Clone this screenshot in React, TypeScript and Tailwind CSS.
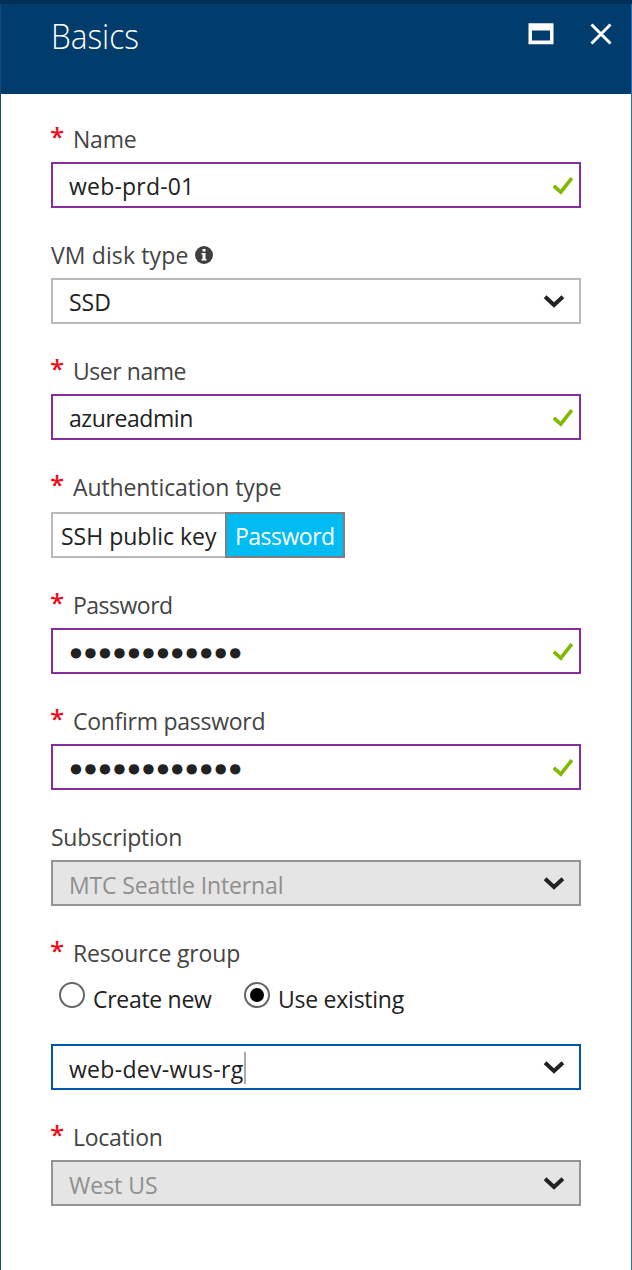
import type { ReactNode } from "react";

function Chevron() {
  return (
    <svg className="mr-[13px] h-6 w-6 shrink-0" viewBox="0 0 24 24" fill="none" stroke="#222" strokeWidth="4">
      <path d="M3.1 7.8 L12 16 L20.9 7.8" />
    </svg>
  );
}

function Check() {
  return (
    <svg className="mr-1 h-6 w-6 shrink-0" viewBox="0 0 24 24" fill="none" stroke="#7fba00" strokeWidth="3.6">
      <path d="M2.8 12.9 L9.8 19.2 L20.8 5.2" />
    </svg>
  );
}

function Label({ children, required, info, track = "", first }: { children: string; required?: boolean; info?: boolean; track?: string; first?: boolean }) {
  return (
    <div className={`flex items-end pb-[7px] text-[23px] leading-8 text-[#444] ${first ? "h-[68px]" : "h-[70px]"}`}>
      {required && (
        <span className="mb-[3px] w-[22px] shrink-0 -indent-px text-[26px] font-semibold leading-8 text-[#e81123]">*</span>
      )}
      <span className={`whitespace-nowrap ${track}`}>{children}</span>
      {info && (
        <svg className="mb-[7px] ml-[7px] h-[18px] w-[18px]" viewBox="0 0 18 18">
          <circle cx="9" cy="9" r="9" fill="#3f3f3f" />
          <path d="M7.5 3h3v2.4h-3zM6.5 7h4v6h1v1.5H6.5V13h1V8.5h-1z" fill="#fff" />
        </svg>
      )}
    </div>
  );
}

function Box({ children, border, icon, track = "", pad = "pt-px" }: { children: ReactNode; border: string; icon: ReactNode; track?: string; pad?: string }) {
  return (
    <div className={`flex h-[46px] items-center justify-between border-2 pl-4 text-[23px] leading-8 ${border}`}>
      <div className={`flex items-center whitespace-nowrap ${track} ${pad}`}>{children}</div>
      {icon}
    </div>
  );
}

function Dots() {
  return (
    <span className="ml-px font-['DejaVu_Sans',sans-serif] text-[13.6px] tracking-[2.62px]">●●●●●●●●●●●●</span>
  );
}

function Radio({ checked }: { checked?: boolean }) {
  return (
    <span className="flex h-[26px] w-[26px] shrink-0 items-center justify-center rounded-full border-2 border-[#666]">
      {checked && <span className="h-[14px] w-[14px] rounded-full bg-black" />}
    </span>
  );
}

const valid = "border-[#882da0] text-[#222]";
const disabled = "border-[#949494] bg-[#e5e5e5] text-[#8f8f8f]";

export default function App() {
  return (
    <div className="flex h-[1270px] w-[632px] flex-col bg-white font-['Open_Sans','Noto_Sans',sans-serif]">
      <div className="h-1 bg-[#002e54]" />
      <div className="flex flex-1 flex-col border-l border-r border-l-[#174a7c] border-r-[#1f72b8]">
        <header className="flex h-[90px] items-start justify-between bg-[#003c6c] pl-[50px] text-white">
          <h1 className="mt-2 origin-left scale-x-90 text-[35px] font-light leading-[48px]">Basics</h1>
          <div className="mr-[18px] mt-[18px] flex items-center gap-[35px]">
            <svg className="h-6 w-[26px]" viewBox="0 0 26 24" fill="#fff">
              <path fillRule="evenodd" d="M0.5 1.3h25v21h-25zM4 8.5v10h18v-10z" />
            </svg>
            <svg className="h-6 w-6" viewBox="0 0 24 24" fill="none" stroke="#fff" strokeWidth="3">
              <path d="M2.5 2.5 L21.5 21.5 M21.5 2.5 L2.5 21.5" />
            </svg>
          </div>
        </header>
        <main className="flex flex-col px-[50px]">
          <Label required first track="tracking-[-0.2px]">Name</Label>
          <Box border={valid} icon={<Check />} track="tracking-[0.2px]">web-prd-01</Box>
          <Label info track="tracking-[0.12px]">VM disk type</Label>
          <Box border="border-[#bababa] text-[#222]" icon={<Chevron />}>SSD</Box>
          <Label required track="tracking-[-0.45px]">User name</Label>
          <Box border={valid} icon={<Check />} track="tracking-[-0.42px]">azureadmin</Box>
          <div className="mb-0.5">
            <Label required track="tracking-[-0.1px]">Authentication type</Label>
          </div>
          <div className="flex h-[46px] text-[23px] leading-8">
            <div className="flex w-[174px] items-center border-2 border-r-0 border-[#bababa] pl-2 pt-0.5 whitespace-nowrap text-[#222]">SSH public key</div>
            <div className="flex w-[120px] items-center border-2 border-[#7f7f7f] bg-[#00bcf2] pl-2 pt-0.5 tracking-[-0.5px] whitespace-nowrap text-white">Password</div>
          </div>
          <Label required track="tracking-[-0.5px]">Password</Label>
          <Box border={valid} icon={<Check />} pad="pt-0.5"><Dots /></Box>
          <Label required track="tracking-[-0.27px]">Confirm password</Label>
          <Box border={valid} icon={<Check />} pad="pt-0.5"><Dots /></Box>
          <Label track="tracking-[-0.25px]">Subscription</Label>
          <Box border={disabled} icon={<Chevron />} track="tracking-[-0.13px]" pad="pt-1">MTC Seattle Internal</Box>
          <Label required track="tracking-[-0.15px]">Resource group</Label>
          <div className="flex h-[68px] items-start pl-2 pt-1.5 text-[23px] leading-8 text-[#222]">
            <div className="flex w-[185px] gap-2"><Radio /><span className="mt-px tracking-[-0.3px] whitespace-nowrap">Create new</span></div>
            <div className="flex gap-2"><Radio checked /><span className="mt-px tracking-[-0.25px] whitespace-nowrap">Use existing</span></div>
          </div>
          <Box border="border-[#0058ad] text-[#222]" icon={<Chevron />} track="tracking-[0.3px]" pad="pt-0.5">
            <span className="pt-0.5">web-dev-wus-rg</span><span className="ml-px h-8 w-0.5 bg-[#aaa]" />
          </Box>
          <Label required track="tracking-[-0.25px]">Location</Label>
          <Box border={disabled} icon={<Chevron />} pad="pt-1">West US</Box>
        </main>
      </div>
    </div>
  );
}
